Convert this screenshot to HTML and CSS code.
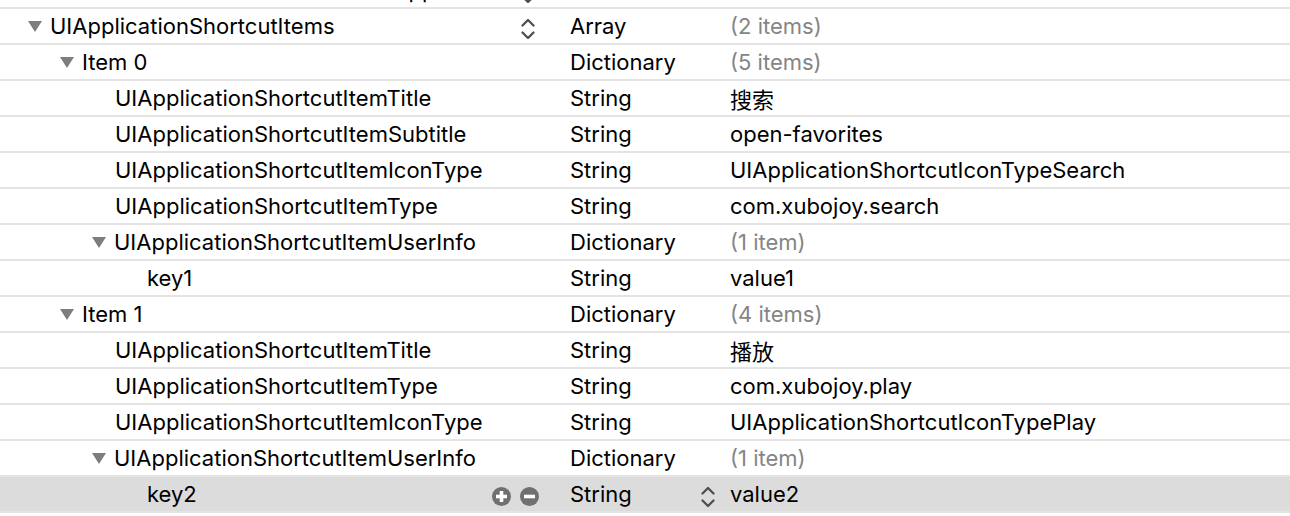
FILE: index.html
```html
<!DOCTYPE html>
<html lang="en">
<head>
<meta charset="utf-8">
<title>Info.plist</title>
<link rel="stylesheet" href="styles.css">
</head>
<body>
<div class="plist">
  <div class="row partial">
    <div class="key l0 leaf">View controller-based status bar appearance</div>
    <div class="ctrl"><svg class="chev" viewBox="0 0 14 22"><polyline points="1.5,7.5 7,2 12.5,7.5"/><polyline points="1.5,14.5 7,20 12.5,14.5"/></svg></div>
    <div class="type">Boolean</div>
    <div class="vctrl"></div>
    <div class="value">NO</div>
  </div>
  <div class="row">
    <div class="key l0"><span class="tri"></span>UIApplicationShortcutItems</div>
    <div class="ctrl"><svg class="chev" viewBox="0 0 14 22"><polyline points="1.5,7.5 7,2 12.5,7.5"/><polyline points="1.5,14.5 7,20 12.5,14.5"/></svg></div>
    <div class="type">Array</div>
    <div class="vctrl"></div>
    <div class="value count">(2 items)</div>
  </div>
  <div class="row">
    <div class="key l1"><span class="tri"></span>Item 0</div>
    <div class="ctrl"></div>
    <div class="type">Dictionary</div>
    <div class="vctrl"></div>
    <div class="value count">(5 items)</div>
  </div>
  <div class="row">
    <div class="key l2 leaf">UIApplicationShortcutItemTitle</div>
    <div class="ctrl"></div>
    <div class="type">String</div>
    <div class="vctrl"></div>
    <div class="value cjk">搜索</div>
  </div>
  <div class="row">
    <div class="key l2 leaf">UIApplicationShortcutItemSubtitle</div>
    <div class="ctrl"></div>
    <div class="type">String</div>
    <div class="vctrl"></div>
    <div class="value">open-favorites</div>
  </div>
  <div class="row">
    <div class="key l2 leaf">UIApplicationShortcutItemIconType</div>
    <div class="ctrl"></div>
    <div class="type">String</div>
    <div class="vctrl"></div>
    <div class="value">UIApplicationShortcutIconTypeSearch</div>
  </div>
  <div class="row">
    <div class="key l2 leaf">UIApplicationShortcutItemType</div>
    <div class="ctrl"></div>
    <div class="type">String</div>
    <div class="vctrl"></div>
    <div class="value">com.xubojoy.search</div>
  </div>
  <div class="row">
    <div class="key l2"><span class="tri"></span>UIApplicationShortcutItemUserInfo</div>
    <div class="ctrl"></div>
    <div class="type">Dictionary</div>
    <div class="vctrl"></div>
    <div class="value count">(1 item)</div>
  </div>
  <div class="row">
    <div class="key l3 leaf">key1</div>
    <div class="ctrl"></div>
    <div class="type">String</div>
    <div class="vctrl"></div>
    <div class="value">value1</div>
  </div>
  <div class="row">
    <div class="key l1"><span class="tri"></span>Item 1</div>
    <div class="ctrl"></div>
    <div class="type">Dictionary</div>
    <div class="vctrl"></div>
    <div class="value count">(4 items)</div>
  </div>
  <div class="row">
    <div class="key l2 leaf">UIApplicationShortcutItemTitle</div>
    <div class="ctrl"></div>
    <div class="type">String</div>
    <div class="vctrl"></div>
    <div class="value cjk">播放</div>
  </div>
  <div class="row">
    <div class="key l2 leaf">UIApplicationShortcutItemType</div>
    <div class="ctrl"></div>
    <div class="type">String</div>
    <div class="vctrl"></div>
    <div class="value">com.xubojoy.play</div>
  </div>
  <div class="row">
    <div class="key l2 leaf">UIApplicationShortcutItemIconType</div>
    <div class="ctrl"></div>
    <div class="type">String</div>
    <div class="vctrl"></div>
    <div class="value">UIApplicationShortcutIconTypePlay</div>
  </div>
  <div class="row">
    <div class="key l2"><span class="tri"></span>UIApplicationShortcutItemUserInfo</div>
    <div class="ctrl"></div>
    <div class="type">Dictionary</div>
    <div class="vctrl"></div>
    <div class="value count">(1 item)</div>
  </div>
  <div class="row selected">
    <div class="key l3 leaf">key2</div>
    <div class="ctrl buttons">
      <svg class="btn" viewBox="0 0 19 19"><circle cx="9.5" cy="9.5" r="9.5"/><rect x="4" y="7.7" width="11" height="3.6"/><rect x="7.7" y="4" width="3.6" height="11"/></svg>
      <svg class="btn" viewBox="0 0 19 19"><circle cx="9.5" cy="9.5" r="9.5"/><rect x="4" y="7.7" width="11" height="3.6"/></svg>
    </div>
    <div class="type">String</div>
    <div class="vctrl"><svg class="chev" viewBox="0 0 14 22"><polyline points="1.5,7.5 7,2 12.5,7.5"/><polyline points="1.5,14.5 7,20 12.5,14.5"/></svg></div>
    <div class="value">value2</div>
  </div>
</div>
</body>
</html>
```

FILE: styles.css
```css
html, body {
  margin: 0;
  padding: 0;
  background: #ffffff;
}

body {
  font-family: "Inter", "Noto Sans CJK SC", sans-serif;
  font-size: 22px;
  color: #000000;
  overflow: hidden;
}

.plist {
  display: flex;
  flex-direction: column;
}

.row {
  display: grid;
  grid-template-columns: 490px 66px 140px 30px 1fr;
  height: 34px;
  border-bottom: 2px solid #e4e4e4;
  align-items: center;
}

.row.partial {
  margin-top: -27px;
}

.row.selected {
  background: #dcdcdc;
}

.key {
  display: flex;
  align-items: center;
  white-space: nowrap;
}

.l0 { padding-left: 28px; }
.l1 { padding-left: 60px; }
.l2 { padding-left: 92px; }
.l3 { padding-left: 124px; }

.l0.leaf { padding-left: 51px; }
.l1.leaf { padding-left: 83px; }
.l2.leaf { padding-left: 115px; }
.l3.leaf { padding-left: 147px; }

.tri {
  width: 0;
  height: 0;
  border-left: 7.5px solid transparent;
  border-right: 7.5px solid transparent;
  border-top: 11px solid #7d7d7d;
  margin-right: 8px;
  margin-top: 1px;
}

.ctrl {
  height: 100%;
  display: flex;
  align-items: center;
  padding-left: 31px;
}

.ctrl.buttons {
  padding-left: 2px;
  gap: 9px;
  padding-top: 5px;
}

.chev {
  width: 14px;
  height: 22px;
  margin-top: 6px;
  fill: none;
  stroke: #4f4f4f;
  stroke-width: 2.3;
  stroke-linecap: round;
  stroke-linejoin: round;
}

.btn {
  width: 19px;
  height: 19px;
  fill: #707070;
}

.btn rect {
  fill: #ffffff;
}

.type {
  padding-left: 14px;
  white-space: nowrap;
}

.vctrl {
  height: 100%;
  display: flex;
  align-items: center;
  padding-left: 5px;
}

.value {
  padding-left: 4px;
  white-space: nowrap;
}

.count {
  color: #858585;
}

.cjk {
  font-family: "Noto Sans CJK SC", sans-serif;
}
```
